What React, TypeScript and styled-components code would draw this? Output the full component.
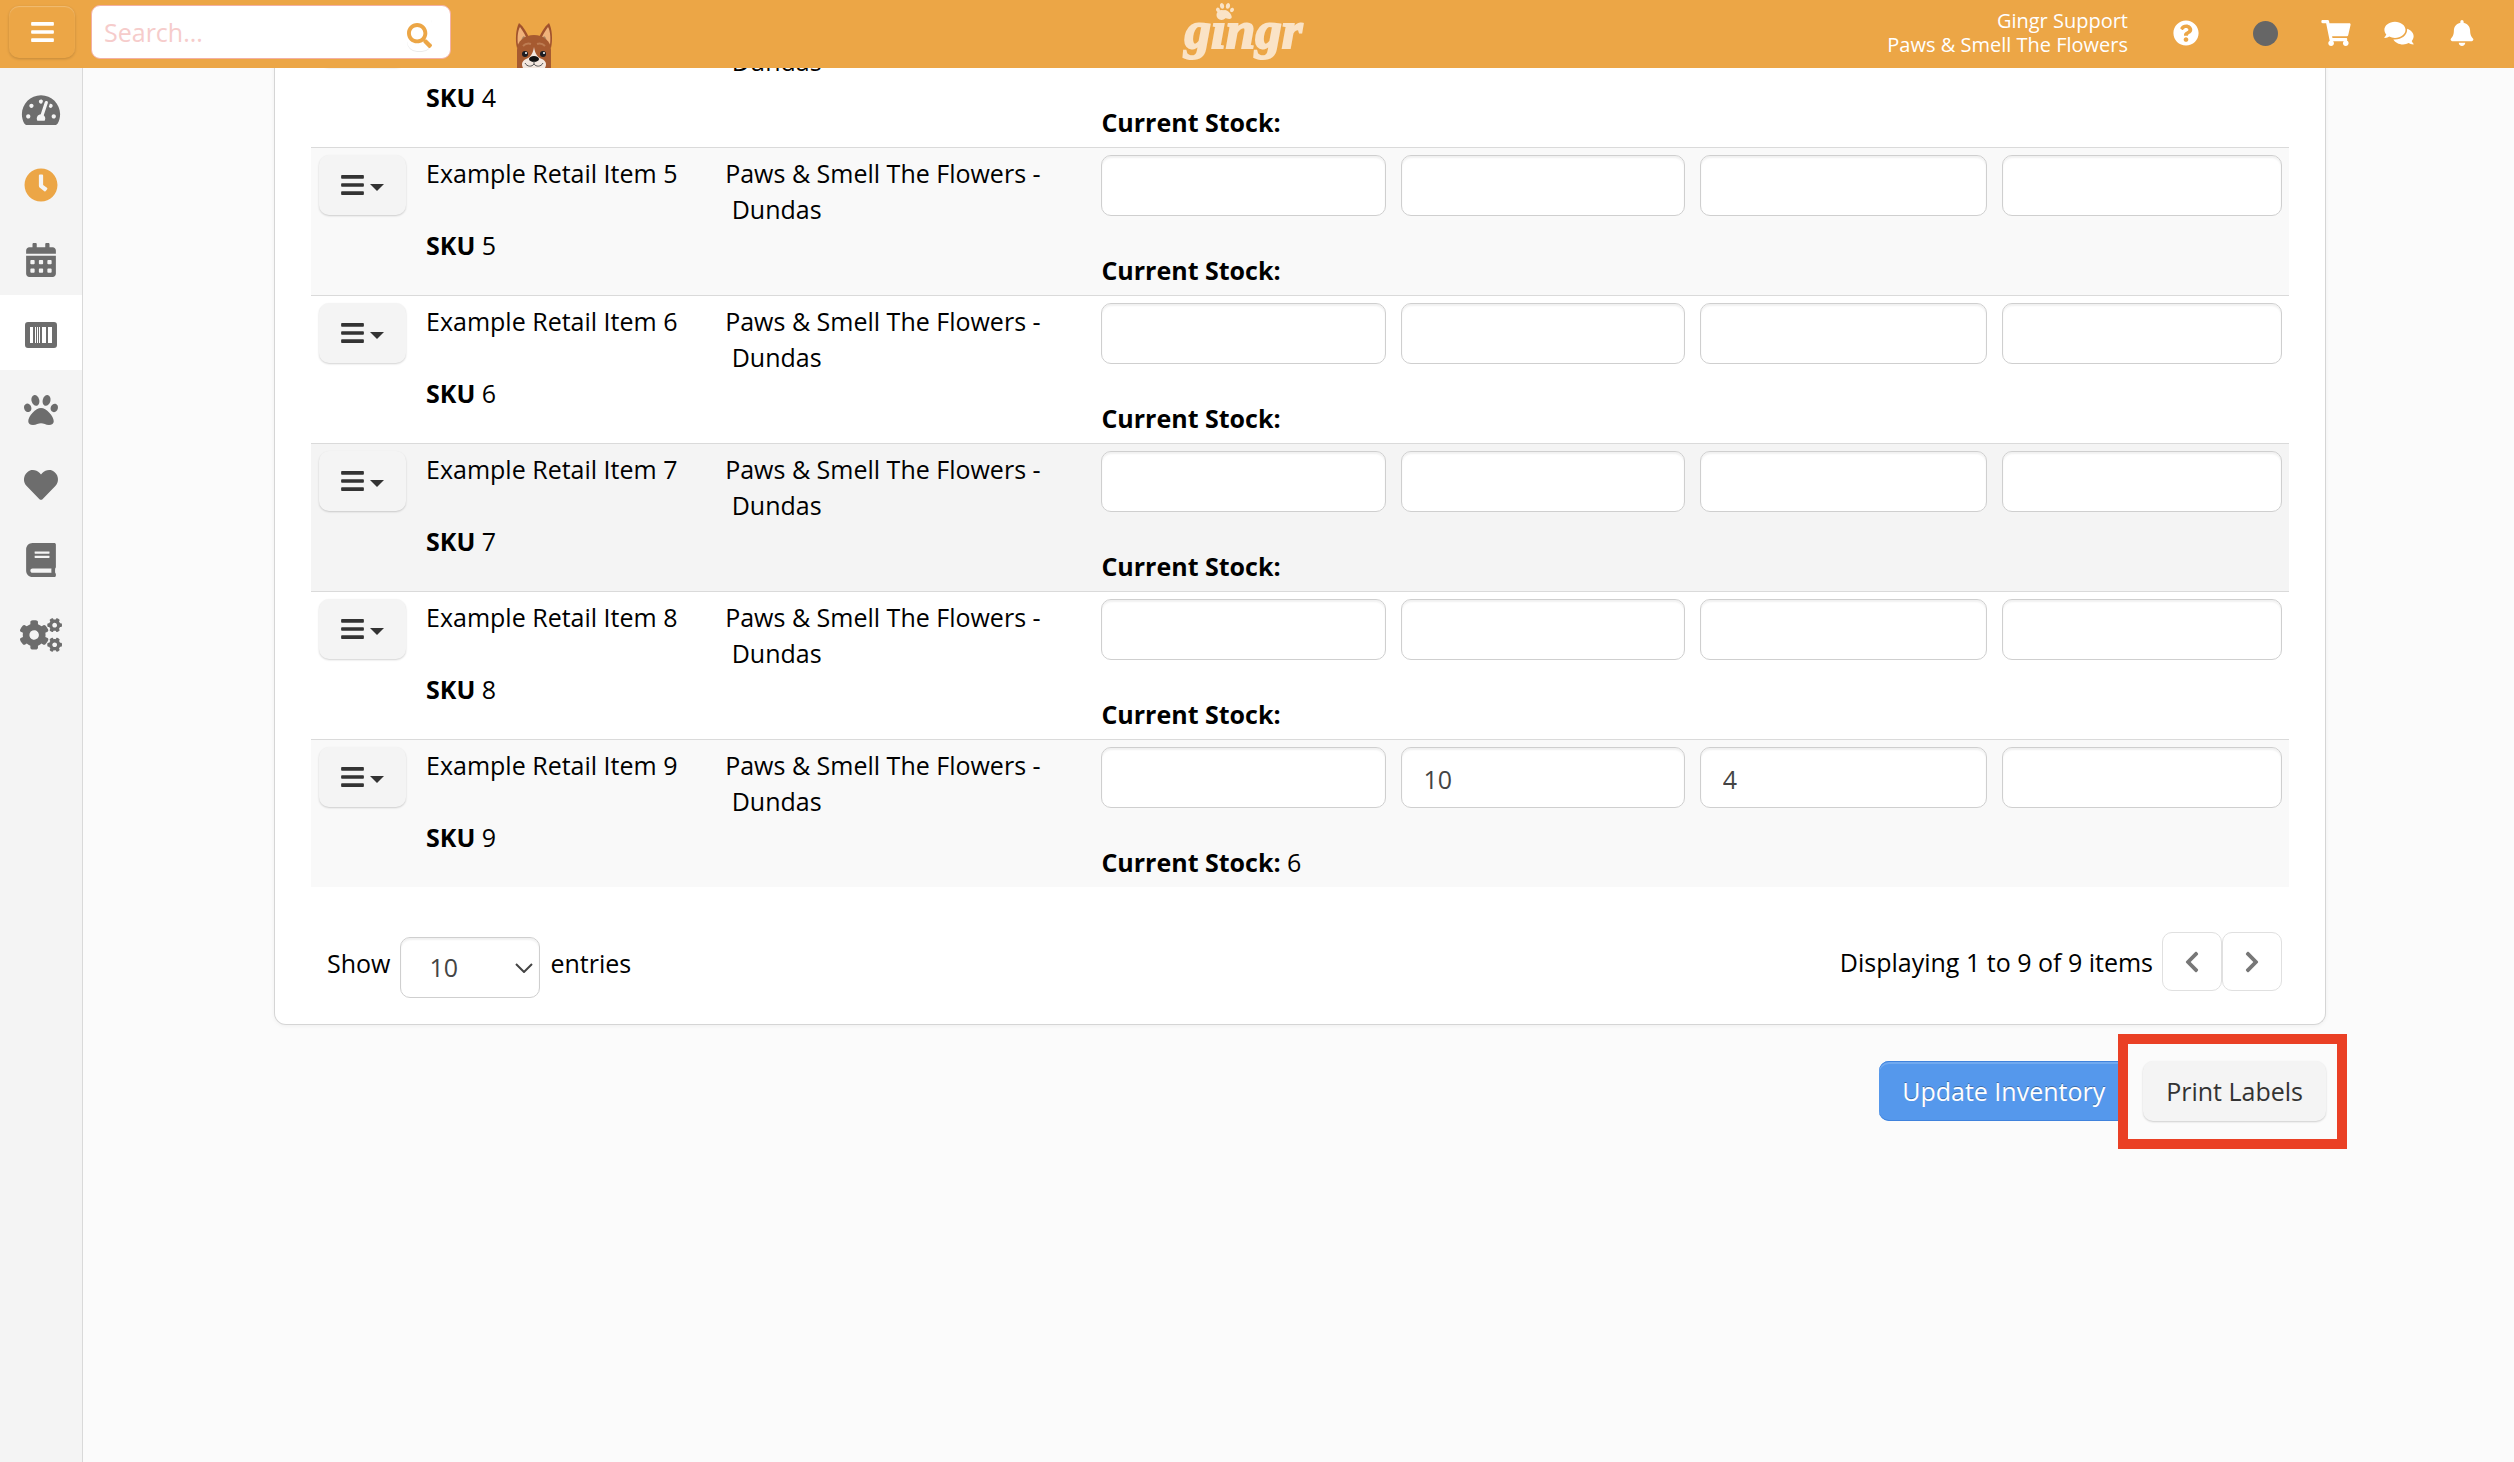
import React from "react";
import styled, { createGlobalStyle } from "styled-components";
import {
  FaBars,
  FaBell,
  FaBook,
  FaCalendarAlt,
  FaChevronLeft,
  FaChevronRight,
  FaClock,
  FaCogs,
  FaComments,
  FaHeart,
  FaPaw,
  FaQuestionCircle,
  FaSearch,
  FaShoppingCart,
  FaTachometerAlt,
} from "react-icons/fa";

const ORANGE = "#eca646";

const GlobalStyle = createGlobalStyle`
  *, *::before, *::after { box-sizing: border-box; }
  body {
    margin: 0;
    background: #fbfbfb;
    color: #000;
    font-family: "Open Sans", sans-serif;
    font-size: 25px;
    line-height: 36px;
  }
  button, input, select { font: inherit; }
`;

/* ---------- Top bar ---------- */

const TopBar = styled.header`
  position: fixed;
  top: 0;
  left: 0;
  right: 0;
  z-index: 2;
  height: 68px;
  padding: 0 36px 0 9px;
  display: grid;
  grid-template-columns: 1fr auto 1fr;
  background: ${ORANGE};
  color: #fff;
`;

const BarStart = styled.div`
  display: flex;
  align-items: center;
`;

const BarEnd = styled.div`
  display: flex;
  align-items: center;
  justify-content: flex-end;
  gap: 42px;
  padding-bottom: 2px;
`;

const MenuIcon = styled(FaBars)`
  width: 23px;
  height: 26px;
`;

const MenuButton = styled.button`
  width: 66px;
  height: 52px;
  margin-bottom: 4px;
  padding: 0;
  display: flex;
  align-items: center;
  justify-content: center;
  border: 0;
  border-radius: 10px;
  background: ${ORANGE};
  color: #fff;
  box-shadow: inset 0 1px 1px rgba(255, 255, 255, 0.25), 0 1px 3px rgba(0, 0, 0, 0.18);
`;

const SearchForm = styled.form`
  width: 360px;
  height: 54px;
  margin: 0 63px 4px 16px;
  padding: 0 18px 0 12px;
  display: flex;
  align-items: center;
  border: 1px solid #f3b0a4;
  border-radius: 9px;
  background: #fff;
`;

const SearchInput = styled.input`
  flex: 1;
  min-width: 0;
  padding: 0;
  border: 0;
  outline: 0;
  background: transparent;
  &::placeholder {
    color: #f6cccb;
    opacity: 1;
  }
`;

const SearchButton = styled.button`
  height: 38px;
  padding: 6px 0 0;
  display: flex;
  align-items: center;
  border: 0;
  border-radius: 10px;
  background: transparent;
  color: ${ORANGE};
  box-shadow: 0 1px 0 rgba(0, 0, 0, 0.08);
`;

const DogArt = styled.svg`
  align-self: flex-end;
  width: 40px;
  height: 46px;
`;

const Logo = styled.a`
  position: relative;
  color: #fae3c6;
  font: italic bold 53px/60px "Liberation Serif", serif;
  text-decoration: none;
  -webkit-text-stroke: 2px #fae3c6;
`;

const LogoPaw = styled(FaPaw)`
  position: absolute;
  top: 2px;
  left: 31px;
  font-size: 18px;
`;

const Account = styled.div`
  font-size: 20px;
  line-height: 24px;
  text-align: right;
`;

const IconGroup = styled.div<{ $gap: number }>`
  display: flex;
  align-items: center;
  gap: ${(p) => p.$gap}px;
`;

const IconLink = styled.a`
  display: flex;
  color: #fff;
  svg {
    width: 32px;
    height: 26px;
  }
`;

const StatusDot = styled.span`
  width: 25px;
  height: 25px;
  border-radius: 50%;
  background: #666;
`;

/* ---------- Side navigation ---------- */

const Page = styled.div`
  display: flex;
  min-height: 100vh;
`;

const SideNav = styled.nav`
  flex: none;
  width: 83px;
  padding-top: 70px;
  border-right: 1px solid #d9d9d9;
  background: #f4f4f4;
`;

const NavLink = styled.a<{ $active?: boolean; $color?: string }>`
  display: flex;
  align-items: center;
  justify-content: center;
  height: 75px;
  padding-top: 4px;
  background: ${(p) => (p.$active ? "#fff" : "transparent")};
  color: ${(p) => p.$color ?? "#6d6d6d"};
  svg {
    width: 42px;
    height: 34px;
  }
`;

/* ---------- Content ---------- */

const Main = styled.main`
  flex: 1;
  min-width: 0;
  padding: 0 188px 0 191px;
`;

const Card = styled.section`
  padding: 0 36px 26px;
  border: 1px solid #d5d5d5;
  border-top: 0;
  border-radius: 0 0 12px 12px;
  background: #fff;
  box-shadow: 0 1px 4px rgba(0, 0, 0, 0.05);
`;

const StockTable = styled.table`
  width: 100%;
  border-spacing: 0;
  table-layout: fixed;
`;

const Row = styled.tr<{ $shade: string }>`
  background: ${(p) => p.$shade};
  &:not(:first-child) > td {
    border-top: 1px solid #dadada;
  }
`;

const Cell = styled.td`
  padding: 7px 7px 7px 8px;
  vertical-align: top;
`;

const ItemName = styled.div`
  margin-bottom: 36px;
`;

const Stock = styled.div`
  margin-top: 36px;
  white-space: nowrap;
`;

const QuantityInput = styled.input`
  display: block;
  width: 100%;
  height: 61px;
  padding: 2px 22px 0;
  border: 1px solid #cfcfcf;
  border-radius: 10px;
  background: #fff;
  color: #444;
  box-shadow: inset 0 2px 2px rgba(0, 0, 0, 0.06);
`;

const SoftButton = styled.button`
  height: 60px;
  padding: 0 23px;
  border: 0;
  border-radius: 10px;
  background: #f4f4f4;
  color: #333;
  box-shadow: 0 1px 2px rgba(0, 0, 0, 0.18);
`;

const RowMenuButton = styled(SoftButton)`
  display: flex;
  align-items: center;
  gap: 6px;
  padding: 0 22px;
`;

const PrimaryButton = styled(SoftButton)`
  background: #5598ec;
  color: #fff;
  text-shadow: 0 -1px 0 rgba(0, 0, 0, 0.3);
  box-shadow: inset 0 1px 0 #3f82dc, inset 0 3px 0 #70a9f0, inset 0 -1px 0 #3f82dc;
`;

const Caret = styled.span`
  margin-top: 4px;
  border: 7px solid transparent;
  border-top-color: #333;
  border-bottom: 0;
`;

const CardFooter = styled.div`
  display: flex;
  justify-content: space-between;
  padding: 45px 7px 0 16px;
`;

const LengthLabel = styled.label`
  display: flex;
  gap: 10px;
  padding-top: 5px;
  line-height: 53px;
`;

const LengthSelect = styled.select`
  width: 140px;
  height: 61px;
  padding: 0 28px;
  border: 1px solid #cfcfcf;
  border-radius: 10px;
  appearance: none;
  color: #444;
  background: #fff
    url("data:image/svg+xml,%3Csvg xmlns='http://www.w3.org/2000/svg' width='18' height='10'%3E%3Cpath d='M1 1l8 8 8-8' fill='none' stroke='%23444' stroke-width='2'/%3E%3C/svg%3E")
    no-repeat right 6px center;
  box-shadow: inset 0 2px 2px rgba(0, 0, 0, 0.06);
`;

const Pager = styled.div`
  display: flex;
  align-items: center;
  height: 59px;
`;

const PagerText = styled.span`
  margin-right: 9px;
`;

const PagerButton = styled.button`
  width: 60px;
  height: 59px;
  padding: 0;
  display: flex;
  align-items: center;
  justify-content: center;
  border: 1px solid #e0e0e0;
  border-radius: 10px;
  background: #fff;
  color: #777;
  font-size: 24px;
`;

const Actions = styled.div`
  display: flex;
  justify-content: flex-end;
  gap: 15px;
  margin-top: 36px;
`;

const Highlighted = styled.div`
  position: relative;
  &::after {
    content: "";
    position: absolute;
    inset: -27px -21px -28px -25px;
    border: 10px solid #ea4025;
    pointer-events: none;
  }
`;

function BarcodeIcon() {
  return (
    <svg viewBox="0 -4 32 34" aria-hidden="true">
      <path
        fill="currentColor"
        fillRule="evenodd"
        d="M3 0h26a3 3 0 0 1 3 3v20a3 3 0 0 1-3 3H3a3 3 0 0 1-3-3V3a3 3 0 0 1 3-3zM5 5v16h3V5zM10 5v16h1V5zM12 5v16h1V5zM14 5v16h1V5zM17 5v16h4V5zM23 5v16h4V5z"
      />
    </svg>
  );
}

function Dog() {
  return (
    <DogArt viewBox="0 0 40 46" aria-hidden="true">
      <path d="M3 26C1 18 2 6 5 1c5 4 8 10 10 15zM37 26c2-8 1-20-2-25-5 4-8 10-10 15z" fill="#a0522d" />
      <path d="M4 23C3 15 4 8 6 5c3 4 6 9 7 13zM36 23c1-8 0-15-2-18-3 4-6 9-7 13z" fill="#f0b27a" />
      <path d="M8 22c-1-5 0-7 2-8l3 4zM32 22c1-5 0-7-2-8l-3 4z" fill="#a98a68" />
      <path d="M3 46V28c0-9 8-15 17-15s17 6 17 15v18z" fill="#a65a30" />
      <path d="M9 24c2-2 5-3 8-2M31 24c-2-2-5-3-8-2" fill="none" stroke="#bd7c52" strokeWidth="2" />
      <path d="M20 25c-1 6-3 10-8 12-4 2-5 5-3 9h22c2-4 1-7-3-9-5-2-7-6-8-12z" fill="#f3e7df" />
      <circle cx="11" cy="32" r="3" fill="#1c1c22" />
      <circle cx="29" cy="32" r="3" fill="#1c1c22" />
      <circle cx="12" cy="31" r="1" fill="#fff" />
      <circle cx="30" cy="31" r="1" fill="#fff" />
      <ellipse cx="20" cy="37" rx="5" ry="3" fill="#111" />
      <path d="M20 39v3M11 41c2 4 7 4 9 1 2 3 7 3 9-1" fill="none" stroke="#555" />
    </DogArt>
  );
}

type Item = { id: number; shade: string; cost?: string; added?: string; stock?: number };

const items: Item[] = [
  { id: 4, shade: "#fff" },
  { id: 5, shade: "#f9f9f9" },
  { id: 6, shade: "#fff" },
  { id: 7, shade: "#f4f4f4" },
  { id: 8, shade: "#fff" },
  { id: 9, shade: "#f9f9f9", cost: "10", added: "4", stock: 6 },
];

const columns = [107, 299, 376, 299, 299, 302, 295];

const nav = [
  { label: "Dashboard", icon: <FaTachometerAlt /> },
  { label: "Time clock", icon: <FaClock />, color: ORANGE },
  { label: "Calendar", icon: <FaCalendarAlt /> },
  { label: "Retail", icon: <BarcodeIcon />, active: true },
  { label: "Animals", icon: <FaPaw /> },
  { label: "Favorites", icon: <FaHeart /> },
  { label: "Reports", icon: <FaBook /> },
  { label: "Admin", icon: <FaCogs /> },
];

function ItemRow({ item }: { item: Item }) {
  return (
    <Row $shade={item.shade}>
      <Cell>
        <RowMenuButton type="button" aria-label={`Actions for item ${item.id}`}>
          <MenuIcon />
          <Caret />
        </RowMenuButton>
      </Cell>
      <Cell>
        <ItemName>Example Retail Item {item.id}</ItemName>
        <b>SKU</b> {item.id}
      </Cell>
      <Cell>
        Paws &amp; Smell The Flowers -<br />
        &nbsp;Dundas
      </Cell>
      <Cell>
        <QuantityInput aria-label="Quantity" />
        <Stock>
          <b>Current Stock:</b> {item.stock}
        </Stock>
      </Cell>
      <Cell>
        <QuantityInput aria-label="Starting quantity" defaultValue={item.cost} />
      </Cell>
      <Cell>
        <QuantityInput aria-label="Used quantity" defaultValue={item.added} />
      </Cell>
      <Cell>
        <QuantityInput aria-label="Threshold" />
      </Cell>
    </Row>
  );
}

export default function App() {
  return (
    <>
      <GlobalStyle />
      <TopBar>
        <BarStart>
          <MenuButton type="button" aria-label="Menu">
            <MenuIcon />
          </MenuButton>
          <SearchForm role="search">
            <SearchInput aria-label="Search" placeholder="Search..." />
            <SearchButton type="button" aria-label="Submit search">
              <FaSearch />
            </SearchButton>
          </SearchForm>
          <Dog />
        </BarStart>
        <Logo href="#">
          gingr
          <LogoPaw />
        </Logo>
        <BarEnd>
          <Account>
            Gingr Support
            <br />
            Paws &amp; Smell The Flowers
          </Account>
          <IconGroup $gap={51}>
            <IconLink href="#" aria-label="Help">
              <FaQuestionCircle />
            </IconLink>
            <StatusDot />
          </IconGroup>
          <IconGroup $gap={31}>
            <IconLink href="#" aria-label="Cart">
              <FaShoppingCart />
            </IconLink>
            <IconLink href="#" aria-label="Messages">
              <FaComments />
            </IconLink>
            <IconLink href="#" aria-label="Notifications">
              <FaBell />
            </IconLink>
          </IconGroup>
        </BarEnd>
      </TopBar>
      <Page>
        <SideNav>
          {nav.map((n) => (
            <NavLink key={n.label} href="#" aria-label={n.label} $active={n.active} $color={n.color}>
              {n.icon}
            </NavLink>
          ))}
        </SideNav>
        <Main>
          <Card>
            <StockTable>
              <colgroup>
                {columns.map((w, i) => (
                  <col key={i} width={w} />
                ))}
              </colgroup>
              <tbody>
                {items.map((item) => (
                  <ItemRow key={item.id} item={item} />
                ))}
              </tbody>
            </StockTable>
            <CardFooter>
              <LengthLabel>
                Show
                <LengthSelect defaultValue="10">
                  <option>10</option>
                  <option>25</option>
                  <option>50</option>
                </LengthSelect>
                entries
              </LengthLabel>
              <Pager>
                <PagerText>Displaying 1 to 9 of 9 items</PagerText>
                <PagerButton type="button" aria-label="Previous page">
                  <FaChevronLeft />
                </PagerButton>
                <PagerButton type="button" aria-label="Next page">
                  <FaChevronRight />
                </PagerButton>
              </Pager>
            </CardFooter>
          </Card>
          <Actions>
            <PrimaryButton type="button">Update Inventory</PrimaryButton>
            <Highlighted>
              <SoftButton type="button">Print Labels</SoftButton>
            </Highlighted>
          </Actions>
        </Main>
      </Page>
    </>
  );
}
